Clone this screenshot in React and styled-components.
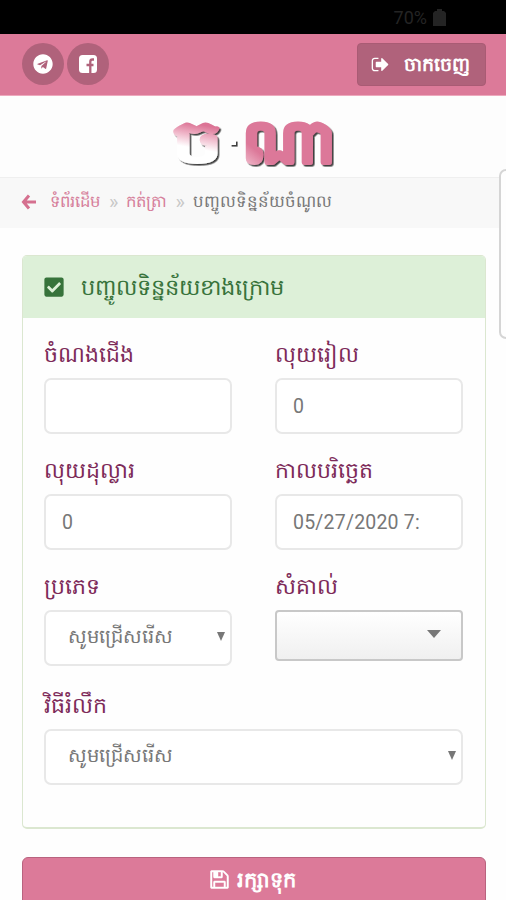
import React from 'react';
import styled, { createGlobalStyle } from 'styled-components';
import { FaTelegram, FaCheckSquare } from 'react-icons/fa';

const Global = createGlobalStyle`
  * { box-sizing: border-box; }
  body { margin: 0; background: #fefefe; overflow: hidden; }
  input, select, button { font-family: inherit; }
`;

const Page = styled.div`
  width: 100%;
  height: 900px;
  overflow: hidden;
  position: relative;
  font-family: Roboto, 'Liberation Sans', sans-serif;
  color: #777;
  background: #fefefe;
`;

const StatusBar = styled.div`
  height: 34px;
  background: #000;
  color: #242424;
  display: flex;
  justify-content: flex-end;
  align-items: center;
  gap: 6px;
  padding: 1px 60px 0 0;
  font-size: 18px;
`;

const Header = styled.header`
  height: 62px;
  background: #dc7a99;
  border-bottom: 1px solid #eda9bd;
  display: flex;
  align-items: center;
  justify-content: space-between;
  padding: 0 20px 1px 22px;
`;

const SocialLinks = styled.div`
  display: flex;
  gap: 3px;
`;

const RoundLink = styled.a`
  width: 42px;
  height: 42px;
  margin-top: -1px;
  border-radius: 50%;
  background: #b0627b;
  color: #fff;
  display: flex;
  align-items: center;
  justify-content: center;
`;

const LogoutButton = styled.button`
  width: 129px;
  height: 43px;
  margin-top: 1px;
  padding: 0 15px 0 13px;
  border: 1px solid #a95b74;
  border-radius: 4px;
  background: #b0627b;
  color: #fff;
  display: flex;
  align-items: center;
  justify-content: space-between;
`;

const Khmer = styled.span`
  font-size: ${p => p.$size}px;
  font-weight: ${p => p.$weight || 400};
  line-height: 30px;
  white-space: nowrap;
`;

const LogoBar = styled.div`
  height: 81px;
  background: #fdfdfd;
  display: flex;
  justify-content: center;
`;

const Breadcrumb = styled.nav`
  height: 51px;
  background: #f8f8f8;
  border-top: 1px solid #efefef;
  display: flex;
  align-items: center;
  padding: 0 0 2px 21px;
`;

const Crumb = styled(Khmer)`
  color: ${p => (p.$current ? '#777' : '#d67f9b')};
  margin-left: ${p => p.$gap}px;
`;

const Separator = styled.span`
  color: #c8c8c8;
  font-size: 20px;
  line-height: 26px;
  margin-left: 9px;
`;

const Content = styled.main`
  padding: 27px 20px 0 22px;
`;

const Panel = styled.section`
  height: 574px;
  border: 1px solid #dbe7d0;
  border-bottom-width: 2px;
  border-radius: 5px;
  overflow: hidden;
  background: #fefefe;
`;

const PanelHeader = styled.div`
  height: 62px;
  background: #ddf0d8;
  color: #37733b;
  display: flex;
  align-items: center;
  gap: 16px;
  padding: 0 0 1px 20px;
`;

const FormGrid = styled.form`
  display: grid;
  grid-template-columns: 188px 188px;
  column-gap: 43px;
  grid-template-rows: 116px 116px 119px 100px;
  padding: 22px 0 0 21px;
`;

const Field = styled.div`
  grid-column: ${p => (p.$wide ? '1 / -1' : 'auto')};
  display: flex;
  flex-direction: column;
`;

const Label = styled.label`
  height: 38px;
  line-height: 30px;
  font-size: 22px;
  color: #7d2a59;
  white-space: nowrap;
`;

const control = `
  width: 100%;
  height: 56px;
  border: 2px solid #e8e8e8;
  border-radius: 7px;
  background: #fff;
`;

const Input = styled.input`
  ${control}
  padding: 1px 30px 1px 16px;
  font-size: 19.500px;
  letter-spacing: 0.2px;
  color: #777;
  outline: none;
`;

const SelectBox = styled.div`
  ${control}
  display: flex;
  align-items: center;
  justify-content: space-between;
  padding: 0 5px 3px 22px;
`;

const ComboBox = styled.div`
  width: 100%;
  height: 51px;
  border: 2px solid #c8c8c8;
  border-radius: 4px;
  background: linear-gradient(#fff, #f0f0f0);
  display: flex;
  align-items: center;
  justify-content: flex-end;
  padding: 0 20px 3px 0;
`;

const Triangle = styled.i`
  border-style: solid;
  border-color: #777 transparent transparent;
  border-width: ${p => (p.$large ? '8px 7px 0' : '9px 4.5px 0')};
`;

const SaveButton = styled.button`
  width: 100%;
  height: 60px;
  margin-top: 28px;
  padding: 0 3px 15px 0;
  border: 1px solid #b9637f;
  border-radius: 6px;
  background: #dc7a99;
  color: #fff;
  display: flex;
  align-items: center;
  justify-content: center;
  gap: 7px;
`;

const EdgeHandle = styled.div`
  position: absolute;
  top: 169px;
  right: -7px;
  width: 14px;
  height: 170px;
  border: 2px solid #d5d5d5;
  border-radius: 9px;
  background: #fefefe;
`;

const SignOutIcon = () => (
  <svg width="19" height="19" viewBox="0 0 1792 1792" fill="currentColor">
    <path d="M704 1440q0 4 1 20t.5 26.500-3 23.500-10 19.500-20.500 6.500h-320q-119 0-203.500-84.500t-84.500-203.500v-704q0-119 84.500-203.500t203.500-84.500h320q13 0 22.500 9.500t9.500 22.500q0 4 1 20t.5 26.500-3 23.500-10 19.500-20.500 6.500h-320q-66 0-113 47t-47 113v704q0 66 47 113t113 47h312l11.500 1 11.500 3 8 5.500 7 9 2 13.500zm928-544q0 26-19 45l-544 544q-19 19-45 19t-45-19-19-45v-288h-448q-26 0-45-19t-19-45v-384q0-26 19-45t45-19h448v-288q0-26 19-45t45-19 45 19l544 544q19 19 19 45z" />
  </svg>
);

const SaveIcon = () => (
  <svg width="21" height="21" viewBox="0 0 1792 1792" fill="currentColor" stroke="currentColor" strokeWidth="40">
    <path d="M512 1536h768v-384h-768v384zm896 0h128v-896q0-14-10-38.500t-20-34.500l-281-281q-10-10-34-20t-39-10v416q0 40-28 68t-68 28h-576q-40 0-68-28t-28-68v-416h-128v1280h128v-416q0-40 28-68t68-28h832q40 0 68 28t28 68v416zm-384-928v-320q0-13-9.500-22.500t-22.500-9.500h-192q-13 0-22.500 9.500t-9.500 22.500v320q0 13 9.500 22.500t22.500 9.500h192q13 0 22.500-9.500t9.500-22.500zm640 32v928q0 40-28 68t-68 28h-1344q-40 0-68-28t-28-68v-1344q0-40 28-68t68-28h928q40 0 88 20t76 48l280 280q28 28 48 76t20 88z" />
  </svg>
);

const FacebookIcon = () => (
  <svg width="18" height="18" viewBox="0 0 18 18">
    <rect width="18" height="18" rx="3.500" fill="#fff" />
    <path d="M15 4.500h-1.500c-1.600 0-2.200.8-2.200 2.300V18M7.500 10h7" fill="none" stroke="#b0627b" strokeWidth="2.300" />
  </svg>
);

const BackIcon = () => (
  <svg width="15" height="16" viewBox="0 0 15 16" fill="none" stroke="#d5708f" strokeWidth="3">
    <path d="M8 1.500 2.500 8 8 14.500M3 8h12" />
  </svg>
);

const BatteryIcon = () => (
  <svg width="13" height="17" viewBox="0 0 13 17" fill="currentColor">
    <path d="M4 0h5v2h2l2 2v13H0V4l2-2h2z" />
  </svg>
);

const Logo = () => (
  <svg width="190" height="81" viewBox="0 0 190 81">
    <defs>
      <linearGradient id="fade" gradientUnits="userSpaceOnUse" x1="18" y1="24" x2="12" y2="56">
        <stop offset="0" stopColor="#dc7395" />
        <stop offset=".35" stopColor="#efb4c7" />
        <stop offset=".75" stopColor="#fff" />
      </linearGradient>
      <linearGradient id="rose" gradientUnits="userSpaceOnUse" x1="84" y1="76" x2="100" y2="56">
        <stop offset="0" stopColor="#f8d5df" />
        <stop offset="1" stopColor="#dc7899" />
      </linearGradient>
      <filter id="relief" filterUnits="userSpaceOnUse" x="0" y="0" width="190" height="81">
        <feDropShadow dx="1.600" dy="1.600" stdDeviation=".7" floodColor="#222" floodOpacity=".85" />
      </filter>
    </defs>
    <g filter="url(#relief)" fontSize="59" fontWeight="500" strokeLinejoin="round">
      <text x="14" y="66" fill="url(#fade)" stroke="url(#fade)" strokeWidth="4" textLength="50" lengthAdjust="spacingAndGlyphs">ច</text>
      <rect x="72" y="44" width="6" height="5" fill="#fff" />
      <text x="85" y="66" fill="url(#rose)" stroke="url(#rose)" strokeWidth="6" textLength="92" lengthAdjust="spacingAndGlyphs">ណា</text>
    </g>
  </svg>
);

const Select = ({ text }) => (
  <SelectBox role="combobox">
    <Khmer $size={19.5}>{text}</Khmer>
    <Triangle />
  </SelectBox>
);

export default function App() {
  return (
    <Page>
      <Global />
      <StatusBar><span>70%</span><BatteryIcon /></StatusBar>
      <Header>
        <SocialLinks>
          <RoundLink><FaTelegram size={20} /></RoundLink>
          <RoundLink><FacebookIcon /></RoundLink>
        </SocialLinks>
        <LogoutButton><SignOutIcon /><Khmer $size={19} $weight={600}>ចាកចេញ</Khmer></LogoutButton>
      </Header>
      <LogoBar><Logo /></LogoBar>
      <Breadcrumb>
        <BackIcon />
        <Crumb $size={16.5} $gap={14}>ទំព័រដើម</Crumb>
        <Separator>»</Separator>
        <Crumb $size={16.5} $gap={8}>កត់ត្រា</Crumb>
        <Separator>»</Separator>
        <Crumb $size={16.6} $gap={8} $current>បញ្ចូលទិន្នន័យចំណូល</Crumb>
      </Breadcrumb>
      <Content>
        <Panel>
          <PanelHeader>
            <FaCheckSquare size={22} />
            <Khmer $size={22.5}>បញ្ចូលទិន្នន័យខាងក្រោម</Khmer>
          </PanelHeader>
          <FormGrid>
            <Field><Label>ចំណងជើង</Label><Input /></Field>
            <Field><Label>លុយរៀល</Label><Input defaultValue="0" /></Field>
            <Field><Label>លុយដុល្លារ</Label><Input defaultValue="0" /></Field>
            <Field><Label>កាលបរិច្ឆេត</Label><Input defaultValue="05/27/2020 7:" /></Field>
            <Field><Label>ប្រភេទ</Label><Select text="សូមជ្រើសរើស" /></Field>
            <Field><Label>សំគាល់</Label><ComboBox><Triangle $large /></ComboBox></Field>
            <Field $wide><Label>វិធីរំលឹក</Label><Select text="សូមជ្រើសរើស" /></Field>
          </FormGrid>
        </Panel>
        <SaveButton><SaveIcon /><Khmer $size={21} $weight={600}>រក្សាទុក</Khmer></SaveButton>
      </Content>
      <EdgeHandle />
    </Page>
  );
}
